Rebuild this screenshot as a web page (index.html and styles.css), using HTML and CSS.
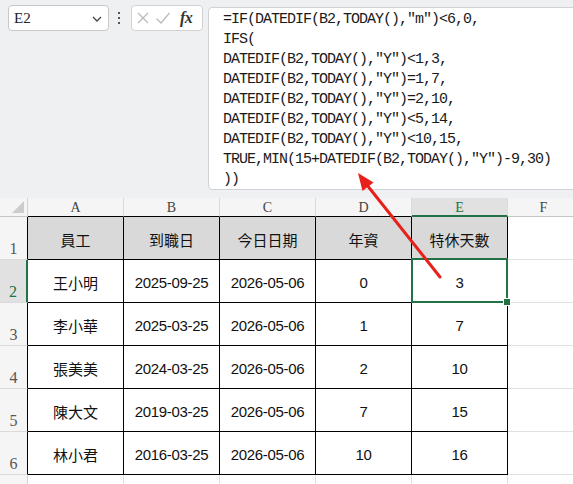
FILE: index.html
```html
<!DOCTYPE html>
<html lang="zh-Hant">
<head>
<meta charset="utf-8">
<title>特休天數</title>
<link rel="stylesheet" href="styles.css">
</head>
<body>
<div class="page">
  <div class="toolbar">
    <div class="namebox">
      <span class="name">E2</span>
      <svg class="chev" width="10" height="6" viewBox="0 0 10 6"><path d="M1 1 L5 5 L9 1" fill="none" stroke="#444" stroke-width="1.3"/></svg>
    </div>
    <div class="vdots"><i></i><i></i><i></i></div>
    <div class="fxbox">
      <svg width="14" height="14" viewBox="0 0 14 14"><path d="M2 2 L12 12 M12 2 L2 12" stroke="#b9b9b9" stroke-width="1.2" fill="none"/></svg>
      <svg width="16" height="14" viewBox="0 0 16 14"><path d="M1.5 7.5 L6 12 L14.5 2" stroke="#b9b9b9" stroke-width="1.2" fill="none"/></svg>
      <span class="fx">fx</span>
    </div>
    <div class="formula"><pre class="ftext">=IF(DATEDIF(B2,TODAY(),"m")&lt;6,0,
IFS(
DATEDIF(B2,TODAY(),"Y")&lt;1,3,
DATEDIF(B2,TODAY(),"Y")=1,7,
DATEDIF(B2,TODAY(),"Y")=2,10,
DATEDIF(B2,TODAY(),"Y")&lt;5,14,
DATEDIF(B2,TODAY(),"Y")&lt;10,15,
TRUE,MIN(15+DATEDIF(B2,TODAY(),"Y")-9,30)
))</pre></div>
  </div>

  <div class="sheet">
    <div class="corner"><span class="tri"></span></div>
    <div class="colhead tb">A</div>
    <div class="colhead tb">B</div>
    <div class="colhead tb">C</div>
    <div class="colhead tb">D</div>
    <div class="colhead sel">E</div>
    <div class="colhead">F</div>

    <div class="rowhead tl">1</div>
    <div class="tc th cjk">員工</div>
    <div class="tc th cjk">到職日</div>
    <div class="tc th cjk">今日日期</div>
    <div class="tc th cjk">年資</div>
    <div class="tc th cjk">特休天數</div>
    <div class="cell"></div>

    <div class="rowhead tl sel">2</div>
    <div class="tc cjk">王小明</div>
    <div class="tc num">2025-09-25</div>
    <div class="tc num">2026-05-06</div>
    <div class="tc num">0</div>
    <div class="tc num active">3<span class="selbox"><span class="handle"></span></span></div>
    <div class="cell"></div>

    <div class="rowhead tl">3</div>
    <div class="tc cjk">李小華</div>
    <div class="tc num">2025-03-25</div>
    <div class="tc num">2026-05-06</div>
    <div class="tc num">1</div>
    <div class="tc num">7</div>
    <div class="cell"></div>

    <div class="rowhead tl">4</div>
    <div class="tc cjk">張美美</div>
    <div class="tc num">2024-03-25</div>
    <div class="tc num">2026-05-06</div>
    <div class="tc num">2</div>
    <div class="tc num">10</div>
    <div class="cell"></div>

    <div class="rowhead tl">5</div>
    <div class="tc cjk">陳大文</div>
    <div class="tc num">2019-03-25</div>
    <div class="tc num">2026-05-06</div>
    <div class="tc num">7</div>
    <div class="tc num">15</div>
    <div class="cell"></div>

    <div class="rowhead tl">6</div>
    <div class="tc cjk">林小君</div>
    <div class="tc num">2016-03-25</div>
    <div class="tc num">2026-05-06</div>
    <div class="tc num">10</div>
    <div class="tc num">16</div>
    <div class="cell"></div>

    <div class="rowhead">7</div>
    <div class="cell"></div>
    <div class="cell"></div>
    <div class="cell"></div>
    <div class="cell"></div>
    <div class="cell"></div>
    <div class="cell"></div>
  </div>

  <svg class="arrow" width="573" height="484" viewBox="0 0 573 484">
    <line x1="440" y1="277" x2="367" y2="185" stroke="#e8201c" stroke-width="3" stroke-linecap="round"/>
    <polygon points="358,173 373.5,182.5 362.5,191" fill="#e8201c"/>
  </svg>
</div>
</body>
</html>
```

FILE: styles.css
```css
* { box-sizing: border-box; }
html, body { margin: 0; padding: 0; }
body {
  width: 573px;
  height: 484px;
  overflow: hidden;
  background: #ffffff;
  font-family: "Liberation Sans", sans-serif;
}
.page { position: relative; width: 573px; height: 484px; overflow: hidden; }

.toolbar {
  display: flex;
  align-items: flex-start;
  background: #eef0f2;
  height: 198px;
  padding-left: 8px;
  overflow: hidden;
}
.toolbar > * { flex-shrink: 0; }
.namebox {
  margin-top: 5px;
  width: 101px;
  height: 26px;
  background: #fff;
  border: 1px solid #c8c8c8;
  border-radius: 4px;
  display: flex;
  align-items: center;
  justify-content: space-between;
  padding: 0 6px 0 5px;
}
.name {
  font-family: "Liberation Serif", serif;
  font-size: 15px;
  color: #222;
  padding-top: 1px;
}
.chev { margin-top: 1px; }
.vdots {
  margin: 12px 0 0 9px;
  width: 2px;
  display: flex;
  flex-direction: column;
  gap: 3px;
}
.vdots i { display: block; width: 2px; height: 2px; background: #555; }
.fxbox {
  margin: 5px 0 0 11px;
  width: 72px;
  height: 26px;
  background: #fff;
  border: 1px solid #d2d2d2;
  border-radius: 4px;
  display: flex;
  align-items: center;
  padding-left: 4px;
  gap: 5px;
}
.fx {
  font-family: "Liberation Serif", serif;
  font-style: italic;
  font-weight: bold;
  font-size: 16px;
  color: #333;
  margin-left: 4px;
  letter-spacing: -0.5px;
}
.formula {
  margin: 7px 0 0 5px;
  width: 372px;
  height: 183px;
  background: #fff;
  border: 1px solid #cfd2d6;
  border-radius: 4px 0 0 4px;
  padding: 2px 0 0 14px;
}
.ftext {
  margin: 0;
  font-family: "Liberation Mono", monospace;
  font-size: 15px;
  letter-spacing: -1px;
  line-height: 20px;
  color: #1a1a1a;
}

.sheet {
  display: grid;
  grid-template-columns: 28px 96px 96px 96px 96px 96px 72px;
  grid-template-rows: 19px repeat(7, 43px);
  width: 580px;
}
.sheet > div {
  border-right: 1px solid #e1e1e1;
  border-bottom: 1px solid #e1e1e1;
}
.sheet > .corner {
  background: #f5f5f5;
  border-right: 1px solid #d4d4d4;
  border-bottom: 1px solid #c6c6c6;
  display: flex;
  justify-content: flex-end;
  align-items: flex-end;
  padding: 0 3px 3px 0;
}
.tri {
  width: 0; height: 0;
  border-left: 12px solid transparent;
  border-bottom: 12px solid #cdcdcd;
}
.sheet > .colhead {
  background: #f5f5f5;
  border-right: 1px solid #dadada;
  border-bottom: 1px solid #c6c6c6;
  display: flex;
  align-items: center;
  justify-content: center;
  font-family: "Liberation Serif", serif;
  font-size: 14px;
  color: #444;
  padding-top: 1px;
}
.sheet > .colhead.tb { border-bottom-color: #000; }
.sheet > .colhead.sel {
  background: #e1e1e1;
  color: #217346;
  border-bottom: 2px solid #217346;
  padding-top: 2px;
}
.sheet > .rowhead {
  background: #f5f5f5;
  border-right: 1px solid #d4d4d4;
  border-bottom: 1px solid #dadada;
  display: flex;
  align-items: flex-end;
  justify-content: center;
  padding-bottom: 1px;
  font-family: "Liberation Serif", serif;
  font-size: 16px;
  color: #555;
}
.sheet > .rowhead.tl { border-right-color: #000; }
.sheet > .rowhead.sel {
  background: #e1e1e1;
  color: #217346;
  border-right: 2px solid #217346;
}
.sheet > .tc {
  border-right: 1px solid #000;
  border-bottom: 1px solid #000;
  display: flex;
  align-items: center;
  justify-content: center;
  padding-top: 3px;
  color: #111;
}
.sheet > .th { background: #d9d9d9; }
.cjk {
  font-family: "Noto Sans CJK TC", "Noto Sans CJK SC", sans-serif;
  font-size: 15px;
}
.num {
  font-family: "Liberation Sans", sans-serif;
  font-size: 15px;
  letter-spacing: -0.3px;
}
.active { position: relative; }
.selbox {
  position: absolute;
  top: -2px;
  left: -1px;
  right: -1px;
  bottom: -1px;
  border: 2px solid #217346;
}
.handle {
  position: absolute;
  right: -4px;
  bottom: -4px;
  width: 6px;
  height: 6px;
  background: #217346;
  outline: 1px solid #fff;
}
.arrow {
  position: absolute;
  left: 0;
  top: 0;
  pointer-events: none;
}
```
